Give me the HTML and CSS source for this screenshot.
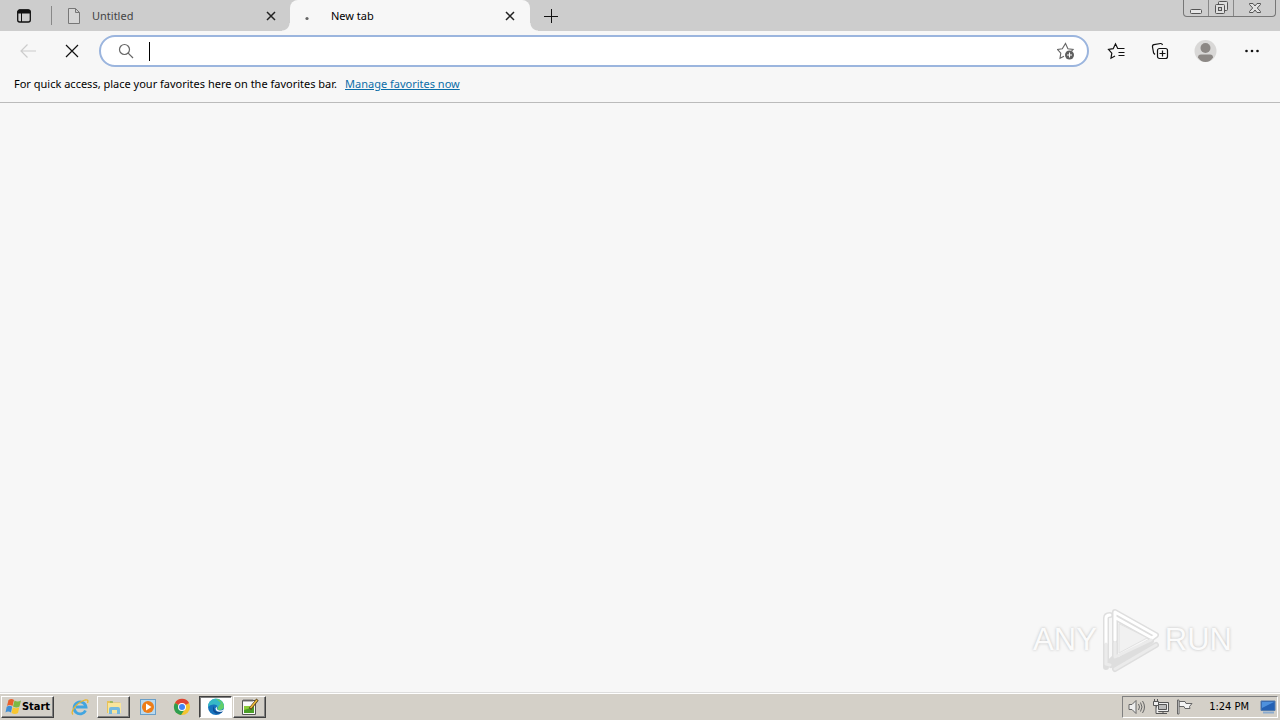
FILE: index.html
```html
<!DOCTYPE html>
<html lang="en">
<head>
    <meta charset="UTF-8">
    <meta name="viewport" content="width=device-width, initial-scale=1.0">
    <title>New tab</title>
    <link rel="stylesheet" href="styles.css">
</head>
<body>
    <!-- Tab strip -->
    <header class="tab-strip">
        <button class="tab-actions" aria-label="Tab actions menu">
            <svg width="16" height="16" viewBox="0 0 16 16" fill="none" stroke="#111">
                <rect x="1.7" y="2" width="12.6" height="12" rx="2" stroke-width="1.3"/>
                <path d="M2 3.500Q2 2 4 2h8q2 0 2 1.500V5H2z" fill="#111"/>
                <path d="M5.500 5v9"/>
            </svg>
        </button>
        <div class="tab">
            <svg class="tab-icon" width="16" height="16" viewBox="0 0 16 16" fill="#d6d6d6" stroke="#777">
                <path d="M2.500 .5h7l4 4v11h-11zM9.500 .5v4h4"/>
            </svg>
            <span class="tab-title">Untitled</span>
            <button class="tab-close" aria-label="Close tab">
                <svg width="10" height="10" viewBox="0 0 10 10" stroke="#222" stroke-width="1.5"><path d="M1 1l8 8M9 1l-8 8"/></svg>
            </button>
        </div>
        <div class="tab active">
            <svg class="tab-icon" width="16" height="16" viewBox="0 0 16 16"><circle cx="8" cy="10.500" r="1.600" fill="#666"/></svg>
            <span class="tab-title">New tab</span>
            <button class="tab-close" aria-label="Close tab">
                <svg width="10" height="10" viewBox="0 0 10 10" stroke="#222" stroke-width="1.5"><path d="M1 1l8 8M9 1l-8 8"/></svg>
            </button>
        </div>
        <button class="new-tab" aria-label="New tab">
            <svg width="14" height="14" viewBox="0 0 14 14" stroke="#111"><path d="M7.500 0v14M0 7.500h14"/></svg>
        </button>
        <div class="window-buttons">
            <button aria-label="Minimize">
                <svg width="14" height="14" viewBox="0 0 14 14"><rect x="1.500" y="8.500" width="11" height="4" rx="1" fill="#e6e6e6" stroke="#555"/></svg>
            </button>
            <button aria-label="Restore">
                <svg width="14" height="14" viewBox="0 0 14 14" fill="#dedede" stroke="#555">
                    <rect x="4.500" y=".5" width="9" height="9" rx="1"/>
                    <rect x="1.500" y="3.500" width="9" height="9" rx="1"/>
                    <rect x="4.500" y="6.500" width="3" height="3" fill="#ccc"/>
                </svg>
            </button>
            <button class="close" aria-label="Close">
                <svg width="14" height="14" viewBox="0 0 14 14"><path d="M1.500 2.500h3.500L7 5l2-2.500h3.500v1L9.300 7l3.200 3.500v1H9L7 9l-2 2.500H1.500v-1L4.700 7 1.500 3.500z" fill="#e2e2e2" stroke="#555"/></svg>
            </button>
        </div>
    </header>

    <!-- Address bar -->
    <nav class="toolbar">
        <button disabled aria-label="Back">
            <svg width="16" height="16" viewBox="0 0 16 16" fill="none" stroke="#ccc" stroke-width="1.200"><path d="M16 8H1M7.500 1.500L1 8l6.500 6.500"/></svg>
        </button>
        <button aria-label="Stop">
            <svg width="14" height="14" viewBox="0 0 14 14" stroke="#111" stroke-width="1.200"><path d="M1 1l12 12M13 1L1 13"/></svg>
        </button>
        <div class="address-bar">
            <svg width="16" height="16" viewBox="0 0 16 16" fill="none" stroke="#666" stroke-width="1.200"><circle cx="6.500" cy="6.500" r="5"/><path d="M10.200 10.200L15 15"/></svg>
            <span class="caret"></span>
            <input type="text" aria-label="Address and search bar">
            <button class="add-favorite" aria-label="Add this page to favorites">
                <svg width="18" height="18" viewBox="0 0 18 18" fill="none" stroke="#666" stroke-width="1.100">
                    <path d="M7 14.200l-4 2 .8-5L.6 7.500l4.700-.7L8.500 1.500l2.400 5.300 5.200.7-1.600 1.700"/>
                    <circle cx="12.500" cy="13" r="4.500" fill="#5f5f5f" stroke="none"/>
                    <path d="M12.500 10.500v5M10 13h5" stroke="#fff"/>
                </svg>
            </button>
        </div>
        <button class="tool" aria-label="Favorites">
            <svg width="18" height="18" viewBox="0 0 18 18" fill="none" stroke="#111" stroke-width="1.200">
                <path d="M8 14l-4 2.200.8-5L1.500 7.500l4.700-.8L8.500 1.800l2.200 4.700H17.500M11.500 10.500h6M11.500 13.500h6"/>
            </svg>
        </button>
        <button class="tool" aria-label="Collections">
            <svg width="18" height="18" viewBox="0 0 18 18" fill="none" stroke="#111" stroke-width="1.200">
                <path d="M4 12.500L2.600 11 1.500 5Q1.200 3 3 2.700L9.500 1.500Q11 1.300 11.500 3"/>
                <rect x="6.500" y="6.500" width="10" height="10" rx="2"/>
                <path d="M11.500 8.500v6M8.500 11.500h6"/>
            </svg>
        </button>
        <button class="tool wide" aria-label="Profile">
            <svg width="24" height="24" viewBox="0 0 24 24">
                <circle cx="12.500" cy="12" r="11" fill="#d9d8d7"/>
                <circle cx="12.500" cy="9" r="5" fill="#8c8885"/>
                <path d="M5 18.500Q5 15.500 8 15.500h9q3 0 3 3-3 4.500-7.500 4.500t-7.500-4.500z" fill="#8c8885"/>
            </svg>
        </button>
        <button class="tool wide" aria-label="Settings and more">
            <svg width="16" height="16" viewBox="0 0 16 16" fill="#111"><circle cx="3.500" cy="8" r="1.300"/><circle cx="9" cy="8" r="1.300"/><circle cx="14.500" cy="8" r="1.300"/></svg>
        </button>
    </nav>

    <!-- Favorites bar -->
    <div class="favorites-bar">
        <span>For quick access, place your favorites here on the favorites bar.</span>
        <a href="#">Manage favorites now</a>
    </div>

    <main class="page">
        <div class="watermark">
            <span>ANY</span>
            <svg width="60" height="66" viewBox="0 0 60 66" fill="none" stroke-linejoin="round" stroke-linecap="round">
                <path d="M5 60V11q0-3 4-3M14 34V5L55 28L51 31L15 11M14 36V50L6 58M14 62L55 38M10 58L50 34" stroke="#dedede" stroke-width="6"/>
                <path d="M18 17V46L46 31z" fill="#f1f1f1" stroke="#e1e1e1"/>
                <path d="M5 36V11q0-3 4-3M14 33V5L55 28L51 31L15 11" stroke="#fff" stroke-width="3"/>
                <path d="M5 37V57L9 58M14 36V50L50 33M14 62L55 38" stroke="#ebebeb" stroke-width="3"/>
            </svg>
            <span>RUN</span>
        </div>
    </main>

    <!-- Taskbar -->
    <footer class="taskbar">
        <button class="start">
            <svg width="17" height="17" viewBox="0 0 17 17">
                <path d="M3.500 2q3-2 5.500 0L7.500 8q-3-2-5.500 0z" fill="#e8602c"/>
                <path d="M9.500 2.500q3 2 6.500 0L14.500 8.500q-3 2-6.500 0z" fill="#7db843"/>
                <path d="M1.700 8.700q3-2 5.500 0L6 14.500q-3-2-5.500 0z" fill="#3f8fd6"/>
                <path d="M7.800 9.200q3 2 6.500 0L13 15q-3 2-6.500 0z" fill="#f8c630"/>
            </svg>
            Start
        </button>
        <button class="task launcher" aria-label="Internet Explorer">
            <svg width="18" height="18" viewBox="0 0 18 18" fill="none">
                <path d="M14.500 12.500A6 6 0 1 1 15 9H5" stroke="#42a5e0" stroke-width="2.800"/>
                <path d="M2 16.500C-1 14 5 5 14 2q4-1 2.500 3" stroke="#e9b62f" stroke-width="1.300"/>
            </svg>
        </button>
        <button class="task raised" aria-label="Windows Explorer">
            <svg width="18" height="18" viewBox="0 0 18 18">
                <path d="M2 3h5l1 1.500h7V15H2z" fill="#e7c25a"/>
                <path d="M3 5h13v10H3z" fill="#f8e59b"/>
                <path d="M4 16v-5q0-2 2-2h7q2 0 2 2v5h-3v-4H7v4z" fill="#74b9df"/>
                <path d="M5 4h3" stroke="#5fae5f"/>
            </svg>
        </button>
        <button class="task launcher" aria-label="Media Player">
            <svg width="18" height="18" viewBox="0 0 18 18">
                <rect x="1.500" y="1.500" width="15" height="15" fill="#b9d9ef" stroke="#6a9fc8"/>
                <circle cx="9" cy="9" r="6" fill="#ee7d18"/>
                <path d="M7 5.500l5.500 3.500L7 12.500z" fill="#fff"/>
            </svg>
        </button>
        <button class="task launcher" aria-label="Chrome">
            <svg width="18" height="18" viewBox="0 0 18 18">
                <circle cx="9" cy="9" r="8" fill="#f4c430"/>
                <path d="M9 9L2 5A8 8 0 0 1 16 5z" fill="#df4433"/>
                <path d="M9 9L2 5a8 8 0 0 0 6 12l4-6z" fill="#2f9e50"/>
                <circle cx="9" cy="9" r="4" fill="#fff"/>
                <circle cx="9" cy="9" r="3" fill="#4285f4"/>
            </svg>
        </button>
        <button class="task pressed" aria-label="Edge">
            <svg width="18" height="18" viewBox="0 0 18 18">
                <circle cx="9" cy="9" r="8" fill="#1673bd"/>
                <path d="M1 9a8 8 0 0 1 16-1q0 4-5 4-2-.5-1.500-2 1-3-3-3.500Q3 6 1 9z" fill="#36b9c6"/>
                <path d="M9 1a8 8 0 0 1 8 7q0 4-5 4-2-.5-1.500-2L14 5z" fill="#62cf6b"/>
                <path d="M7 8q-1 5 4 6 3 .5 5-1.500l-1 2q-7 3-9-2-.500-3 1-4.500z" fill="#0d4b92"/>
                <path d="M10.500 8q-2 3 1 4.200 3 1 5.500-1l-1 2q-7 2-7.500-3z" fill="#fff"/>
            </svg>
        </button>
        <button class="task raised" aria-label="Notepad++">
            <svg width="18" height="18" viewBox="0 0 18 18">
                <path d="M1.500 2.500h13v14h-13z" fill="#fafafa" stroke="#555"/>
                <path d="M3 8h10v7H3z" fill="#8ccc3a"/>
                <path d="M3 12l10-3v6H3z" fill="#4a9d27"/>
                <path d="M3 1v3M5 1v3M7 1v3M9 1v3M11 1v3" stroke="#777"/>
                <path d="M16.500 1.500L9 11" stroke="#59431b" stroke-width="3"/>
                <path d="M16 2L9.500 10" stroke="#f0bd3d" stroke-width="1.500"/>
            </svg>
        </button>
        <div class="tray">
            <svg width="18" height="16" viewBox="0 0 18 16" fill="#eee" stroke="#666">
                <path d="M1 5.500h3l4-4v13l-4-4H1z"/>
                <path d="M10.500 5q2 3 0 6M12.500 3.500q3 4.500 0 9M14.500 2q4 6 0 12" fill="none"/>
            </svg>
            <svg width="18" height="16" viewBox="0 0 18 16" fill="#eee" stroke="#555">
                <path d="M4.500 3.500h12v9h-12zM7 14.500h8M11 12.500v2"/>
                <path d="M6.500 5.500h8v5h-8z" fill="#bbb"/>
                <path d="M1.500 2.500h5v4h-5zM2.500 0v2M5.500 0v2M4 7v7.500h3"/>
            </svg>
            <svg width="18" height="16" viewBox="0 0 18 16" fill="#f4f4f4" stroke="#666">
                <path d="M3 2.500h6l1 2h6l-2.500 3 .5 2H9l-1-2H3z"/>
                <path d="M1.500 1h1.500v14H1.500z"/>
            </svg>
            <time class="clock">1:24 PM</time>
            <svg width="16" height="16" viewBox="0 0 16 16">
                <path d="M1 2h14v9.500H1z" fill="#2461b4" stroke="#537bac"/>
                <path d="M2 3h12L2 9z" fill="#4e91dd"/>
                <path d="M3 13.500h11" stroke="#8babce" stroke-width="2"/>
            </svg>
        </div>
    </footer>
</body>
</html>
```
FILE: styles.css
```css
* {
    box-sizing: border-box;
}

body {
    margin: 0;
    height: 100vh;
    display: flex;
    flex-direction: column;
    background: #f7f7f7;
    color: #000;
    font-family: "Noto Sans", "Segoe UI", sans-serif;
    font-size: 11px;
}

button {
    display: flex;
    align-items: center;
    justify-content: center;
    padding: 0;
    border: none;
    background: none;
    font: inherit;
    color: inherit;
}

svg {
    flex-shrink: 0;
}

/* Tabs */
.tab-strip {
    display: flex;
    height: 31px;
    background: #cdcdcd;
}

.tab-actions {
    width: 52px;
    padding-right: 4px;
    margin: 6px 0;
    border-right: 1px solid #888;
}

.tab {
    display: flex;
    align-items: center;
    width: 238px;
    padding: 0 13px 0 14px;
}

.tab-icon {
    margin-right: 10px;
}

.tab-title {
    flex: 1;
    color: #444;
}

.tab-close {
    width: 12px;
    height: 16px;
}

.tab.active {
    position: relative;
    width: 240px;
    padding: 0 14px 0 9px;
    border-radius: 8px 8px 0 0;
    background: #f7f7f7;
}

.active .tab-icon {
    margin-right: 16px;
}

.active .tab-title {
    color: #000;
}

/* curved feet of the active tab */
.tab.active::before,
.tab.active::after {
    content: "";
    position: absolute;
    bottom: 0;
    width: 8px;
    height: 8px;
}

.tab.active::before {
    right: 100%;
    background: radial-gradient(circle at 0 0, #cdcdcd 7px, #f7f7f7 8px);
}

.tab.active::after {
    left: 100%;
    background: radial-gradient(circle at 100% 0, #cdcdcd 7px, #f7f7f7 8px);
}

.new-tab {
    width: 42px;
}

.window-buttons {
    display: flex;
    height: 17px;
    margin: 0 4px 0 auto;
    border: 1px solid #777;
    border-top: none;
    border-radius: 0 0 4px 4px;
}

.window-buttons button {
    width: 25px;
    border-right: 1px solid #888;
}

.window-buttons .close {
    width: 41px;
    border-right: none;
}

/* Toolbar */
.toolbar {
    display: flex;
    align-items: center;
    height: 40px;
    padding: 0 6px;
}

.toolbar > button {
    width: 44px;
    height: 32px;
}

.address-bar {
    flex: 1;
    display: flex;
    align-items: center;
    height: 32px;
    margin: 0 5px;
    padding: 0 12px 0 17px;
    border: 2px solid #9bb5de;
    border-radius: 16px;
    background: #fff;
}

.caret {
    width: 1px;
    height: 19px;
    margin-left: 15px;
    background: #000;
}

.address-bar input {
    flex: 1;
    min-width: 0;
    padding: 0;
    border: none;
    outline: none;
    background: none;
    font: inherit;
}

.toolbar > .wide {
    width: 46px;
}

/* Favorites bar */
.favorites-bar {
    display: flex;
    gap: 8px;
    height: 32px;
    padding: 5px 14px;
    border-bottom: 1px solid #bbb;
    line-height: 16px;
}

.favorites-bar a {
    color: #0b6ea8;
}

/* Page */
.page {
    flex: 1;
    display: flex;
    align-items: flex-end;
    justify-content: flex-end;
    padding: 0 48px 19px 0;
}

.watermark {
    display: flex;
    align-items: center;
    gap: 4px;
    color: #fbfbfb;
    font-family: "Liberation Sans", Arial, sans-serif;
    font-size: 31px;
    line-height: 48px;
    text-shadow: 0 0 3px #bbb;
}

/* Taskbar */
.taskbar {
    display: flex;
    align-items: center;
    height: 28px;
    padding: 1px 2px 1px 1px;
    border-top: 1px solid #ddd;
    background: #d4d0c8;
    box-shadow: inset 0 1px #fff;
    font-family: Tahoma, "DejaVu Sans Condensed", sans-serif;
}

.start,
.raised {
    border: 1px solid;
    border-color: #fff #404040 #404040 #fff;
    box-shadow: inset -1px -1px #808080;
}

.start {
    width: 53px;
    height: 22px;
    margin-right: 9px;
    font-weight: bold;
}

.task {
    width: 33px;
    height: 22px;
    margin-right: 1px;
}

.pressed {
    border: 1px solid;
    border-color: #404040 #fff #fff #404040;
    box-shadow: inset 1px 1px #808080;
    background: #fff;
}

.tray {
    display: flex;
    align-items: center;
    gap: 6px;
    height: 22px;
    margin-left: auto;
    padding: 0 1px 0 5px;
    border: 1px solid;
    border-color: #808080 #fff #fff #808080;
}

.clock {
    margin: 0 5px 0 9px;
}
```
